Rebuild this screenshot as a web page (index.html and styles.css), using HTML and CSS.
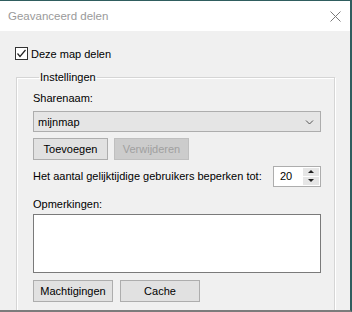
FILE: index.html
```html
<!DOCTYPE html>
<html lang="nl">

<head>
<meta charset="UTF-8" />
<meta name="viewport" content="width=device-width, initial-scale=1.0" />
<title>Geavanceerd delen</title>
<link rel="stylesheet" href="styles.css">
</head>

<body>
<div class="window">
<div class="titlebar">
<span class="title">Geavanceerd delen</span>
<svg class="close" width="11" height="11" viewBox="0 0 11 11">
<path d="M0.5 0.5 L10.5 10.5 M10.5 0.5 L0.5 10.5" stroke="#7a7a7a" stroke-width="1" fill="none" />
</svg>
</div>

<div class="content">
<label class="check">
<span class="checkbox">
<svg width="11" height="11" viewBox="0 0 11 11">
<path d="M1.5 5.5 L4 8.5 L9.5 2" stroke="#222" stroke-width="1.2" fill="none" />
</svg>
</span>
Deze map delen
</label>

<fieldset class="group">
<legend>Instellingen</legend>

<div class="label">Sharenaam:</div>
<div class="combo">
<span>mijnmap</span>
<svg width="9" height="6" viewBox="0 0 9 6">
<path d="M1 1.5 L4.5 5 L8 1.5" stroke="#555" stroke-width="1" fill="none" />
</svg>
</div>

<div class="btnrow">
<button class="btn">Toevoegen</button>
<button class="btn" disabled>Verwijderen</button>
</div>

<div class="limit">
<span>Het aantal gelijktijdige gebruikers beperken tot:</span>
<div class="spin">
<span class="spinval">20</span>
<div class="spinbtns">
<div class="spinbtn"><span class="up"></span></div>
<div class="spinbtn"><span class="down"></span></div>
</div>
</div>
</div>

<div class="label notes">Opmerkingen:</div>
<div class="memo"></div>

<div class="btnrow bottom">
<button class="btn">Machtigingen</button>
<button class="btn">Cache</button>
</div>
</fieldset>
</div>
</div>
</body>

</html>
```

FILE: styles.css
```css
* {
margin: 0;
padding: 0;
box-sizing: border-box;
}

body {
width: 352px;
height: 312px;
overflow: hidden;
font-family: "Liberation Sans", Arial, sans-serif;
font-size: 11px;
color: #000;
background: #f0f0f0;
}

.window {
height: 312px;
border-top: 1px solid #2f5d5e;
border-right: 2px solid #2f5d5e;
border-bottom: 2px solid #7c7c7c;
background: #f0f0f0;
overflow: hidden;
}

.titlebar {
height: 30px;
background: #fff;
display: flex;
align-items: center;
justify-content: space-between;
padding: 0 9px 0 8px;
}

.title {
color: #9a9a9a;
font-size: 11.5px;
line-height: 16px;
}

.content {
padding: 16px 0 0 15px;
}

.check {
display: flex;
align-items: center;
gap: 3px;
height: 13px;
line-height: 16px;
}

.checkbox {
width: 13px;
height: 13px;
border: 1px solid #333;
background: #fff;
display: flex;
}

.group {
margin: 9px 0 0 1px;
width: 319px;
border: 1px solid #d5d5d5;
box-shadow: inset 1px 1px #fff, 1px 1px #fff;
padding: 5px 13px 0 16px;
height: 260px;
}

.group legend {
margin-left: 6px;
padding: 0 1px;
line-height: 16px;
}

.label {
line-height: 16px;
}

.combo {
margin-top: 5px;
height: 21px;
width: 288px;
border: 1px solid #adadad;
background: #e5e5e5;
display: flex;
align-items: center;
justify-content: space-between;
padding: 0 6px 0 4px;
}

.btnrow {
display: flex;
gap: 6px;
margin-top: 6px;
}

.btn {
width: 75px;
height: 22px;
border: 1px solid #adadad;
background: #e1e1e1;
font-family: inherit;
font-size: 11px;
color: #000;
}

.btn:disabled {
background: #cccccc;
border-color: #bfbfbf;
color: #a0a0a0;
}

.limit {
margin-top: 5px;
display: flex;
align-items: center;
justify-content: space-between;
width: 288px;
height: 22px;
}

.spin {
width: 48px;
height: 21px;
border: 1px solid #adadad;
background: #fff;
display: flex;
align-items: center;
justify-content: space-between;
padding: 1px 1px 1px 6px;
}

.spinbtns {
width: 16px;
height: 17px;
display: flex;
flex-direction: column;
gap: 1px;
}

.spinbtn {
flex: 1;
background: #e6e6e6;
display: flex;
align-items: center;
justify-content: center;
}

.up {
border-left: 3px solid transparent;
border-right: 3px solid transparent;
border-bottom: 3px solid #222;
}

.down {
border-left: 3px solid transparent;
border-right: 3px solid transparent;
border-top: 3px solid #222;
}

.notes {
margin-top: 9px;
}

.memo {
margin-top: 2px;
width: 288px;
height: 59px;
border: 1px solid #7a7a7a;
background: #fff;
}

.bottom {
margin-top: 7px;
gap: 7px;
}

.bottom .btn {
width: 80px;
}
```
